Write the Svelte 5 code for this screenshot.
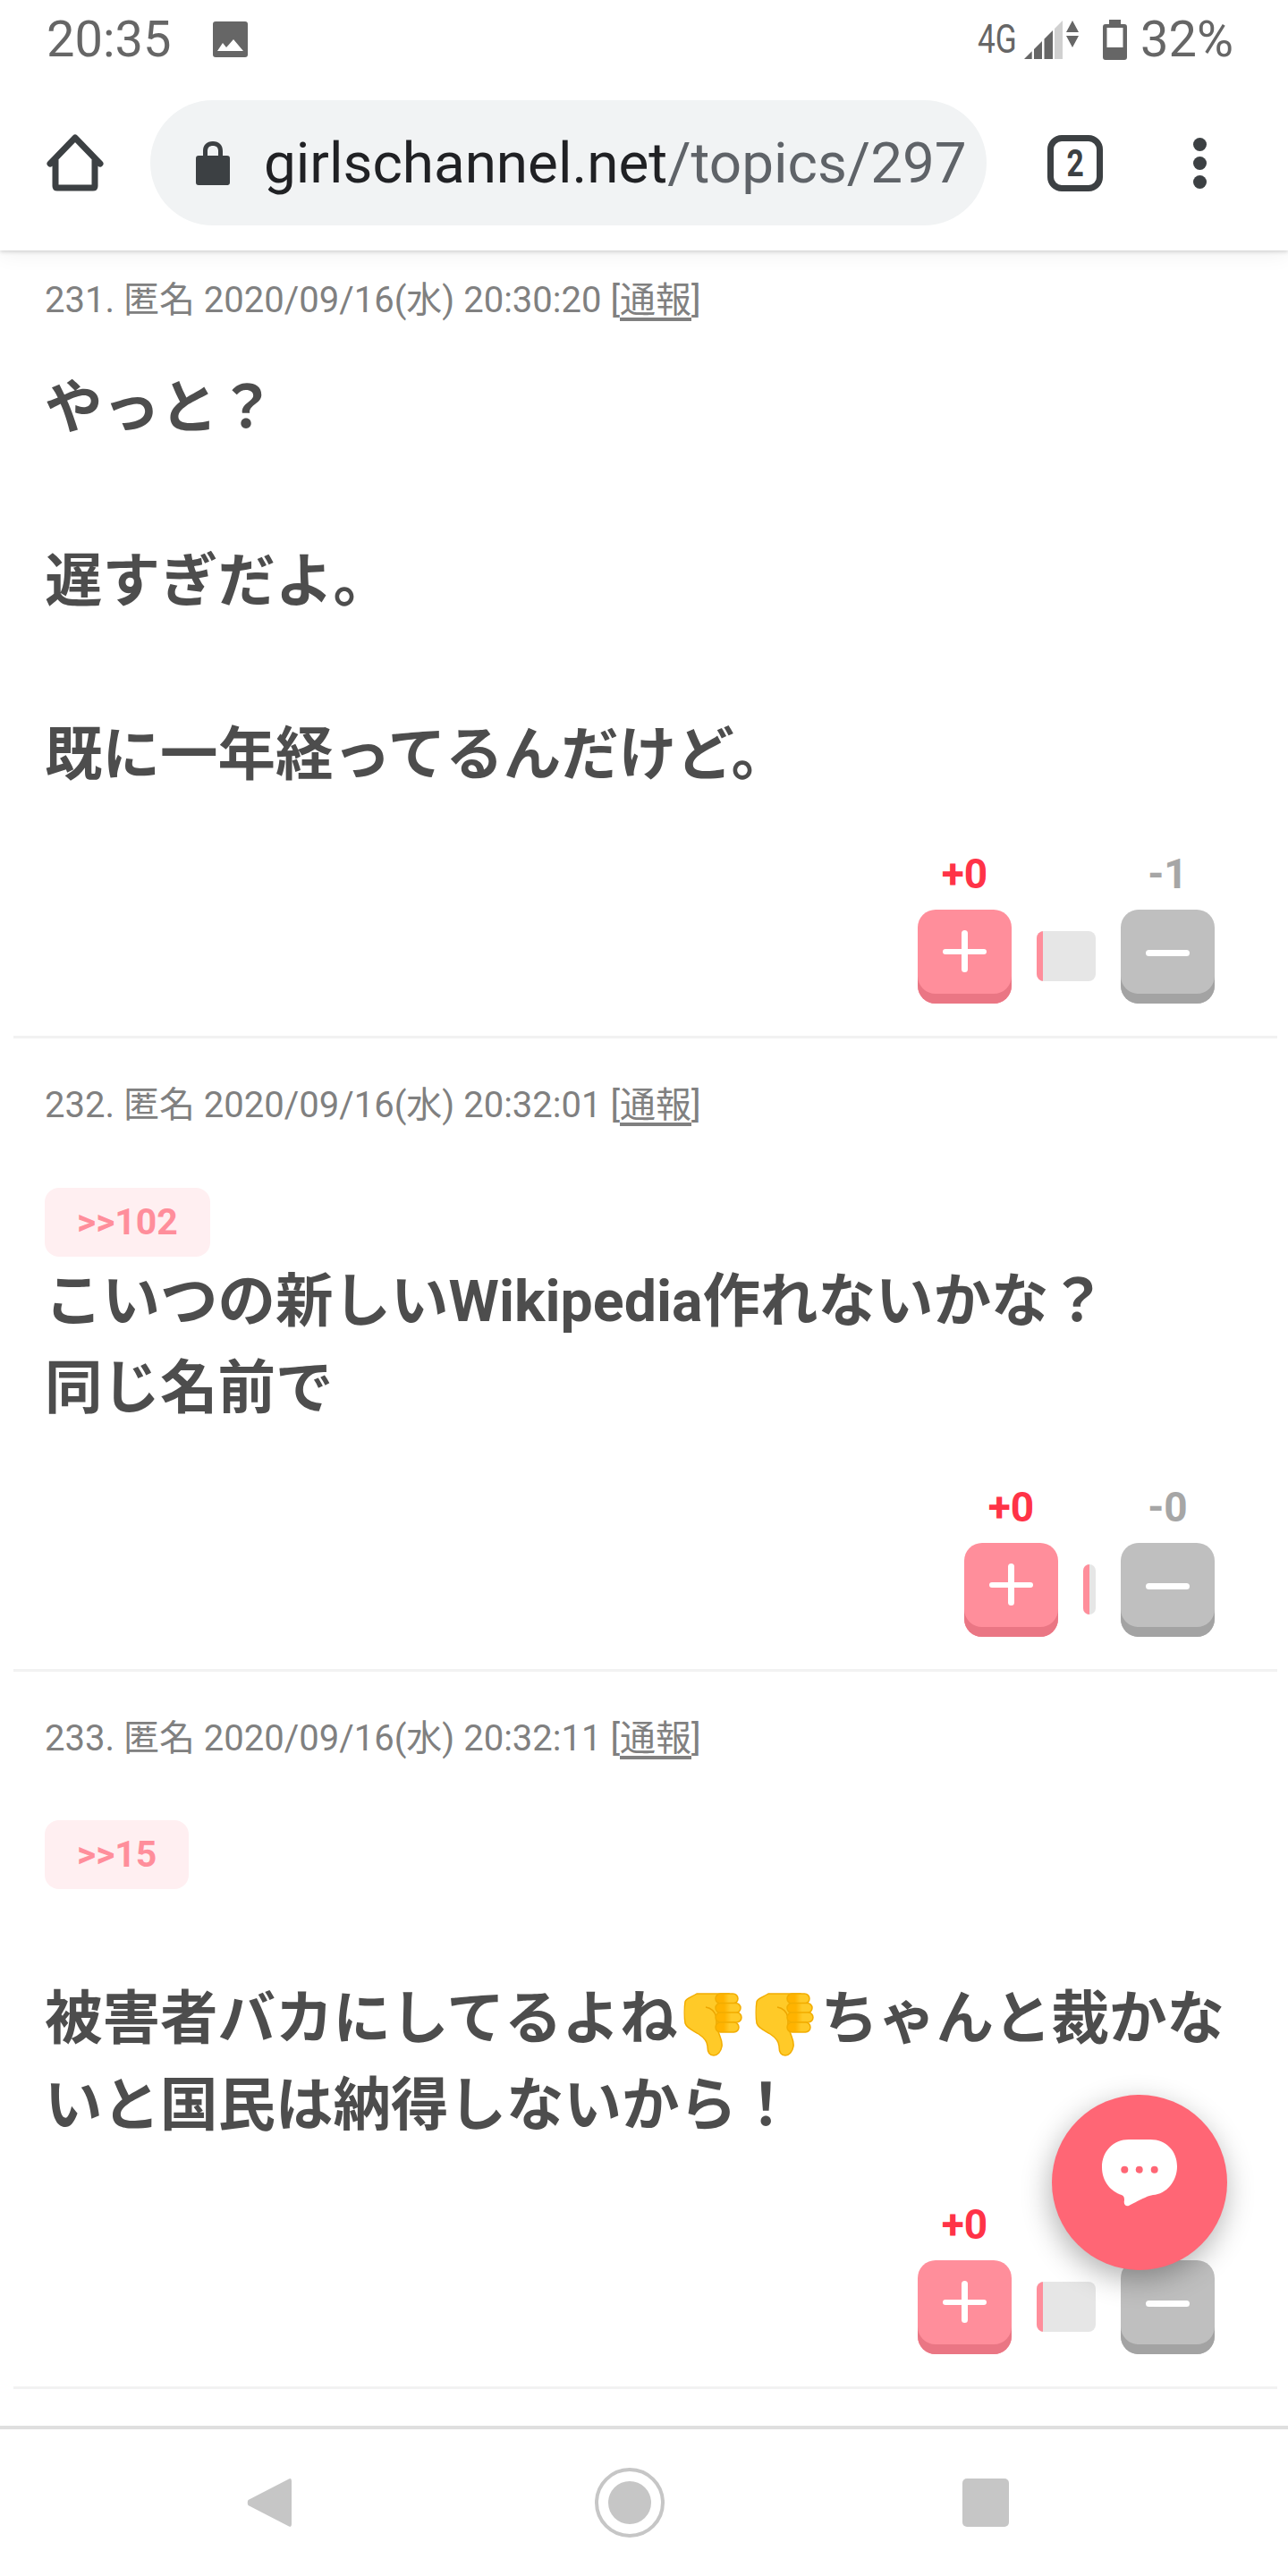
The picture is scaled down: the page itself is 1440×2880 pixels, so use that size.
<script lang="ts">
  type Comment = {
    no: number;
    time: string;
    anchor?: string;
    plus: string;
    minus: string;
    barWidth: number;
  };

  const comments: Comment[] = [
    { no: 231, time: '20:30:20', plus: '+0', minus: '-1', barWidth: 66 },
    { no: 232, time: '20:32:01', anchor: '>>102', plus: '+0', minus: '-0', barWidth: 14 },
    { no: 233, time: '20:32:11', anchor: '>>15', plus: '+0', minus: '-1', barWidth: 66 }
  ];
</script>

{#snippet thumbsDown()}
  <svg class="emoji" viewBox="-7 -1 80 72" aria-label="👎">
    <path
      d="M14 1H50V43H38C40 50 43 54 42 60C41 66 37 70 33 70C28 70 26 66 26 60C26 54 22 50 16 46C10 42 3 40 1 34C0 28 0 16 1 10C2 6 8 5 14 1Z"
      fill="#ffca28"
      stroke="#f2ad00"
      stroke-width="1.5"
    />
    <path d="M24 16C30 17 34 20 36 27V40" fill="none" stroke="#eda600" stroke-width="1.5" />
    {#each [[35, 1, 25], [35, 11.5, 28], [35, 22, 29], [35, 33, 26]] as [x, y, w]}
      <rect {x} {y} width={w} height="11" rx="5.5" fill="url(#finger)" stroke="#f2ad00" stroke-width="1.5" />
    {/each}
  </svg>
{/snippet}

<svg class="defs" width="0" height="0" aria-hidden="true">
  <defs>
    <linearGradient id="finger" x1="0" x2="1" y1="0" y2="0">
      <stop offset="0.35" stop-color="#ffb300" />
      <stop offset="0.6" stop-color="#ffca28" />
    </linearGradient>
  </defs>
</svg>

<div class="phone">
  <header class="chrome">
    <div class="status">
      <span class="clock">20:35</span>
      <svg class="ic-picture" viewBox="0 0 39 40">
        <rect width="39" height="40" rx="3" fill="#666" />
        <path d="M5 33L11 24L15 29L23 20L34 33Z" fill="#fff" />
      </svg>
      <span class="spacer"></span>
      <span class="net">4G</span>
      <svg class="ic-signal" viewBox="0 0 61 43">
        <path d="M0 43L8.7 34.3V43ZM11 32L20 23V43H11ZM22.5 20.5L32 11V43H22.5Z" fill="#666" />
        <path d="M34 9L43 0V43H34Z" fill="#d0d0d0" />
        <path d="M47 13L54 0L61 13ZM47 17H61L54 30Z" fill="#666" />
      </svg>
      <svg class="ic-battery" viewBox="0 0 27 45">
        <path
          d="M7 0H20V5H24Q27 5 27 8V42Q27 45 24 45H3Q0 45 0 42V8Q0 5 3 5H7ZM4.500 9V31H22.500V9Z"
          fill="#666"
          fill-rule="evenodd"
        />
      </svg>
      <span class="percent">32%</span>
    </div>

    <div class="toolbar">
      <svg class="ic-home" viewBox="0 0 64 64">
        <path
          d="M4 33L32 4L60 33M10 28V58Q10 60 12 60H52Q54 60 54 58V28"
          fill="none"
          stroke="#3c4043"
          stroke-width="7"
          stroke-linejoin="round"
          stroke-linecap="round"
        />
      </svg>
      <div class="omnibox">
        <svg class="ic-lock" viewBox="0 0 38 50">
          <path
            d="M3 17H8V12C8 5 12 1 19 1C26 1 30 5 30 12V17H35Q38 17 38 20V47Q38 50 35 50H3Q0 50 0 47V20Q0 17 3 17ZM13 17H25V12C25 8 23 6 19 6C15 6 13 8 13 12Z"
            fill="#3c4043"
            fill-rule="evenodd"
          />
        </svg>
        <span class="url"><b>girlschannel.net</b>/topics/297</span>
      </div>
      <div class="tabs"><span>2</span></div>
      <div class="menu"><i></i><i></i><i></i></div>
    </div>
  </header>

  <main class="list">
    {#each comments as c}
      <article class="comment">
        <div class="meta">{c.no}. 匿名 2020/09/16(水) {c.time} [<u>通報</u>]</div>
        <div class="body">
          {#if c.anchor}
            <div class="anchor">{c.anchor}</div>
          {/if}
          {#if c.no === 231}
            <p>やっと？<br /><br />遅すぎだよ。<br /><br />既に一年経ってるんだけど。</p>
          {:else if c.no === 232}
            <p>こいつの新しいWikipedia作れないかな？<br />同じ名前で</p>
          {:else}
            <p><br />被害者バカにしてるよね{@render thumbsDown()}{@render thumbsDown()}ちゃんと裁かないと国民は納得しないから！</p>
          {/if}
        </div>
        <div class="votes">
          <div class="vote plus">
            <span class="count">{c.plus}</span>
            <div class="btn"><i class="h"></i><i class="v"></i></div>
          </div>
          <div class="ratio" style="width: {c.barWidth}px"><i></i></div>
          <div class="vote minus">
            <span class="count">{c.minus}</span>
            <div class="btn"><i class="h"></i></div>
          </div>
        </div>
      </article>
    {/each}
  </main>

  <div class="fab">
    <svg viewBox="0 0 84 75" width="84" height="75">
      <path
        d="M30 0H54C72 0 84 13 84 30C84 47 72 61 57 62C50 63 38 70 30 74C26 75 24 72 25 68C25 64 24 63 22 62C10 58 0 47 0 31C0 13 13 0 30 0Z"
        fill="#fff"
      />
      <circle cx="25.300" cy="33.700" r="4" fill="#ff6675" />
      <circle cx="41.700" cy="33.700" r="4" fill="#ff6675" />
      <circle cx="58.700" cy="33.700" r="4" fill="#ff6675" />
    </svg>
  </div>

  <nav class="navbar">
    <svg class="ic-back" viewBox="0 0 50 56">
      <path d="M47 1.500Q50 0 50 4V52Q50 56 47 54.500L1.500 31Q0 28 1.500 25Z" fill="#c6c6c6" />
    </svg>
    <svg class="ic-circle" viewBox="0 0 78 78">
      <circle cx="39" cy="39" r="37" fill="none" stroke="#c6c6c6" stroke-width="4" />
      <circle cx="39" cy="39" r="24" fill="#c6c6c6" />
    </svg>
    <div class="ic-square"></div>
  </nav>
</div>

<style>
  :global(body) {
    background: #fff;
  }

  .defs {
    position: absolute;
  }

  .phone {
    position: relative;
    display: flex;
    flex-direction: column;
    width: 1440px;
    height: 2880px;
    overflow: hidden;
    background: #fff;
    font-family: Roboto, 'Noto Sans CJK JP', sans-serif;
  }

  .chrome {
    position: relative;
    z-index: 2;
    flex: none;
    height: 280px;
    background: #fff;
    box-shadow: 0 2px 4px rgba(0, 0, 0, 0.14), 0 6px 22px rgba(0, 0, 0, 0.05);
  }

  .status {
    display: flex;
    align-items: center;
    height: 88px;
    padding: 0 61px 0 52px;
    color: #666;
  }

  .clock {
    font-size: 56px;
    width: 186px;
  }

  .ic-picture {
    width: 39px;
    height: 40px;
  }

  .spacer {
    flex: 1;
  }

  .net {
    font-size: 44px;
    width: 52px;
    transform: scaleX(0.8);
    transform-origin: left center;
  }

  .ic-signal {
    width: 61px;
    height: 43px;
    margin-right: 27px;
  }

  .ic-battery {
    width: 27px;
    height: 45px;
    margin-right: 15px;
  }

  .percent {
    font-size: 56px;
  }

  .toolbar {
    display: flex;
    align-items: center;
    height: 140px;
    margin-top: 24px;
    padding-left: 52px;
  }

  .ic-home {
    width: 64px;
    height: 64px;
    margin-right: 52px;
  }

  .omnibox {
    display: flex;
    align-items: center;
    width: 935px;
    height: 140px;
    padding-left: 51px;
    box-sizing: border-box;
    border-radius: 70px;
    background: #f1f3f4;
    overflow: hidden;
  }

  .ic-lock {
    width: 38px;
    height: 50px;
    margin-right: 38px;
  }

  .url {
    font-size: 63.800px;
    color: #5f6368;
    white-space: nowrap;
  }

  .url b {
    font-weight: 400;
    color: #202124;
  }

  .tabs {
    display: flex;
    align-items: center;
    justify-content: center;
    width: 62px;
    height: 63px;
    box-sizing: border-box;
    margin-left: 68px;
    border: 7px solid #3c4043;
    border-radius: 16px;
  }

  .tabs span {
    font-size: 42px;
    font-weight: 700;
    color: #3c4043;
    transform: scaleX(0.8);
  }

  .menu {
    display: flex;
    flex-direction: column;
    gap: 6px;
    margin-left: 101px;
  }

  .menu i {
    display: block;
    width: 15px;
    height: 15px;
    border-radius: 50%;
    background: #3c4043;
  }

  .list {
    flex: 1;
    min-height: 0;
    margin-top: -19px;
  }

  .comment {
    padding: 51px 70px 36px 35px;
    margin-left: 15px;
    margin-right: 12px;
    border-bottom: 3px solid #f2f2f2;
  }

  .meta {
    height: 48px;
    line-height: 48px;
    font-size: 40px;
    color: #808080;
    white-space: nowrap;
  }

  .meta u {
    text-underline-offset: 6px;
  }

  .body {
    margin-top: 46px;
    font-size: 64.500px;
    font-weight: 700;
    line-height: 97px;
    color: #4d4d4d;
  }

  .body p {
    margin: 0;
    margin-right: -35px;
    padding-top: 2px;
    margin-bottom: -2px;
  }

  .anchor {
    display: inline-block;
    vertical-align: top;
    height: 77px;
    margin-top: 22px;
    padding: 0 36px;
    border-radius: 16px;
    background: #ffeff1;
    font-size: 41px;
    line-height: 77px;
    color: #ff8e9b;
  }

  .comment:last-child .anchor {
    margin-top: 21px;
  }

  .comment:last-child p {
    margin-top: -2px;
  }

  .emoji {
    display: inline-block;
    width: 80px;
    height: 72px;
    vertical-align: -20px;
  }

  .votes {
    display: flex;
    justify-content: flex-end;
    gap: 28px;
    margin-top: 63px;
  }

  .vote {
    display: flex;
    flex-direction: column;
    align-items: center;
    gap: 17px;
    width: 105px;
  }

  .count {
    height: 46px;
    line-height: 46px;
    font-size: 46px;
    font-weight: 700;
    white-space: nowrap;
  }

  .plus .count {
    color: #ff3347;
  }

  .minus .count {
    color: #a6a6a6;
  }

  .btn {
    position: relative;
    width: 105px;
    height: 105px;
    border-radius: 20px;
    overflow: hidden;
  }

  .plus .btn {
    background: #ff8e9b;
    box-shadow: inset 0 -11px 0 #ea7684;
  }

  .minus .btn {
    background: #bfbfbf;
    box-shadow: inset 0 -11px 0 #a3a3a3;
  }

  .btn i {
    position: absolute;
    background: #fff;
    border-radius: 4px;
  }

  .plus .btn .h {
    left: 28px;
    top: 44px;
    width: 49px;
    height: 6px;
  }

  .plus .btn .v {
    left: 49px;
    top: 23px;
    width: 7px;
    height: 47px;
  }

  .minus .btn .h {
    left: 28px;
    top: 45px;
    width: 49px;
    height: 7px;
  }

  .ratio {
    align-self: flex-end;
    height: 56px;
    margin-bottom: 25px;
    border-radius: 8px;
    background: #e6e6e6;
    overflow: hidden;
  }

  .ratio i {
    display: block;
    width: 7px;
    height: 100%;
    background: #ff8e9b;
  }

  .fab {
    position: absolute;
    left: 1176px;
    top: 2342px;
    z-index: 3;
    display: flex;
    align-items: center;
    justify-content: center;
    width: 196px;
    height: 196px;
    border-radius: 50%;
    background: #ff6675;
    box-shadow: -2px 10px 32px rgba(0, 0, 0, 0.3);
  }

  .fab svg {
    margin-top: -22px;
  }

  .navbar {
    position: absolute;
    left: 0;
    right: 0;
    bottom: 0;
    z-index: 2;
    display: flex;
    align-items: center;
    height: 164px;
    border-top: 4px solid #dfdfdf;
    background: #fff;
  }

  .ic-back {
    width: 50px;
    height: 56px;
    margin-left: 276px;
  }

  .ic-circle {
    width: 78px;
    height: 78px;
    margin-left: 339px;
  }

  .ic-square {
    width: 52px;
    height: 54px;
    margin-left: 333px;
    border-radius: 5px;
    background: #c6c6c6;
  }
</style>
